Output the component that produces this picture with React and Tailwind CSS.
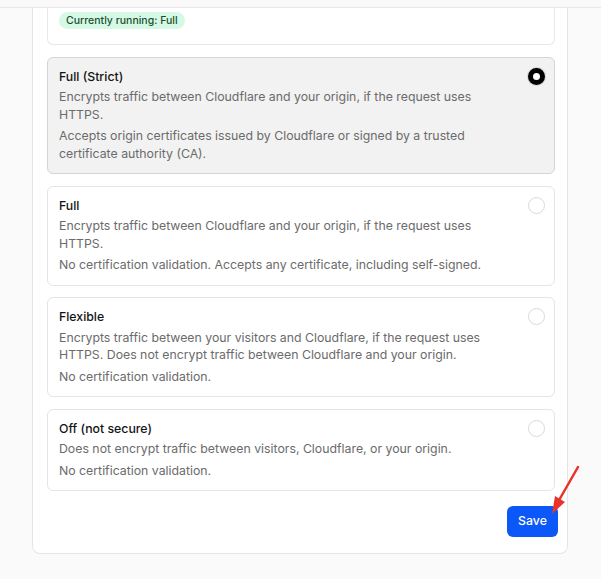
const options = [
  {
    title: 'Full (Strict)',
    lines: [
      'Encrypts traffic between Cloudflare and your origin, if the request uses HTTPS.',
      'Accepts origin certificates issued by Cloudflare or signed by a trusted certificate authority (CA).',
    ],
    selected: true,
  },
  {
    title: 'Full',
    lines: [
      'Encrypts traffic between Cloudflare and your origin, if the request uses HTTPS.',
      'No certification validation. Accepts any certificate, including self-signed.',
    ],
  },
  {
    title: 'Flexible',
    lines: [
      'Encrypts traffic between your visitors and Cloudflare, if the request uses HTTPS. Does not encrypt traffic between Cloudflare and your origin.',
      'No certification validation.',
    ],
  },
  {
    title: 'Off (not secure)',
    lines: [
      'Does not encrypt traffic between visitors, Cloudflare, or your origin.',
      'No certification validation.',
    ],
  },
];

function Radio({ checked }) {
  if (checked) {
    return <span className="block w-[17px] h-[17px] rounded-full border-[5px] border-black bg-white shadow-[0_0_0_1px_#d4d4d4]" />;
  }
  return <span className="block w-[17px] h-[17px] rounded-full border-[1.5px] border-[#d9d9d9] bg-white" />;
}

function Option({ title, lines, selected }) {
  return (
    <label
      className={
        'flex justify-between rounded-md border px-[11px] pt-[10px] pb-[11px] pr-[9px] cursor-pointer ' +
        (selected ? 'bg-[#f2f2f2] border-[#d4d4d4]' : 'bg-white border-[#e5e5e5]')
      }
    >
      <div className="max-w-[430px]">
        <div className="text-[12.3px] leading-[17.5px] font-medium text-[#141414]">{title}</div>
        <p className="mt-[3px] text-[12.3px] leading-[17.5px] text-[#6b6b6b]">{lines[0]}</p>
        <p className="mt-1 text-[12.3px] leading-[17.5px] text-[#6b6b6b]">{lines[1]}</p>
      </div>
      <div>
        <Radio checked={selected} />
      </div>
    </label>
  );
}

export default function App() {
  return (
    <div className="relative min-h-[579px] bg-[#fafafa] font-['Inter',sans-serif]">
      <div className="h-[8px] border-b border-[#e8e8e8] bg-[#f9f9f9]" />

      <div className="ml-[32px] w-[536px] rounded-b-lg border border-t-0 border-[#e5e5e5] bg-white pl-[14px] pr-[9px] pb-[16px]">
        <div className="pr-[3px] space-y-[11.5px]">
          <div className="flex rounded-b-md border border-t-0 border-[#e8e8e8] px-[11px] pt-[4px] pb-[15px]">
            <span className="rounded-full bg-[#d8f8e6] px-[7px] text-[10.5px] leading-[17px] font-medium text-[#14532d]">
              Currently running: Full
            </span>
          </div>

          {options.map((o) => (
            <Option key={o.title} {...o} />
          ))}
        </div>

        <div className="mt-[15px] flex justify-end">
          <button
            type="button"
            className="h-[31px] w-[51px] rounded-md bg-[#0b57f7] text-[12.3px] font-medium text-white"
          >
            Save
          </button>
        </div>
      </div>

      <svg className="absolute left-0 top-0 pointer-events-none" width="601" height="579">
        <line x1="578" y1="467" x2="558" y2="502" stroke="#e8322b" strokeWidth="2.5" strokeLinecap="round" />
        <polygon points="552,514 555,496 565,502" fill="#e8322b" />
      </svg>
    </div>
  );
}
